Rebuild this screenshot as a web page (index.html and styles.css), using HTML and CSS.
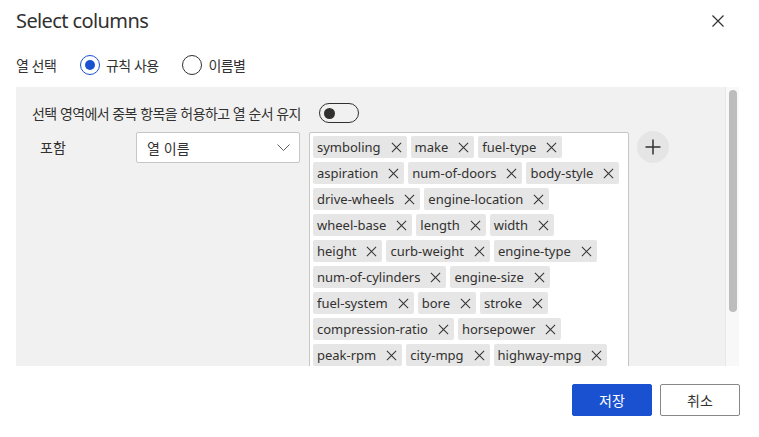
FILE: index.html
```html
<!DOCTYPE html>
<html lang="ko">
<head>
<meta charset="utf-8">
<title>Select columns</title>
<link rel="stylesheet" href="styles.css">
</head>
<body>
<div class="dialog">
  <header class="header">
    <h1 class="title">Select columns</h1>
    <button class="close" aria-label="닫기">
      <svg width="12" height="12" viewBox="0 0 12 12"><path d="M0.5 0.5 L11.5 11.5 M11.5 0.5 L0.5 11.5" stroke="#323130" stroke-width="1.2" fill="none"/></svg>
    </button>
  </header>

  <div class="mode-row">
    <span class="mode-label">열 선택</span>
    <label class="radio checked"><span class="radio-circle"></span>규칙 사용</label>
    <label class="radio"><span class="radio-circle"></span>이름별</label>
  </div>

  <section class="panel">
    <div class="panel-content">
      <div class="toggle-row">
        <span>선택 영역에서 중복 항목을 허용하고 열 순서 유지</span>
        <span class="toggle"><span class="knob"></span></span>
      </div>
      <div class="include-row">
        <span class="include-label">포함</span>
        <div class="dropdown">
          <span>열 이름</span>
          <svg width="13" height="7" viewBox="0 0 13 7"><path d="M0.5 0.5 L6.5 6.5 L12.5 0.5" stroke="#605e5c" stroke-width="1" fill="none"/></svg>
        </div>
        <div class="tags">
          <div class="tag-row">
            <span class="tag">symboling<i class="x"></i></span>
            <span class="tag">make<i class="x"></i></span>
            <span class="tag">fuel-type<i class="x"></i></span>
          </div>
          <div class="tag-row">
            <span class="tag">aspiration<i class="x"></i></span>
            <span class="tag">num-of-doors<i class="x"></i></span>
            <span class="tag">body-style<i class="x"></i></span>
          </div>
          <div class="tag-row">
            <span class="tag">drive-wheels<i class="x"></i></span>
            <span class="tag">engine-location<i class="x"></i></span>
          </div>
          <div class="tag-row">
            <span class="tag">wheel-base<i class="x"></i></span>
            <span class="tag">length<i class="x"></i></span>
            <span class="tag">width<i class="x"></i></span>
          </div>
          <div class="tag-row">
            <span class="tag">height<i class="x"></i></span>
            <span class="tag">curb-weight<i class="x"></i></span>
            <span class="tag">engine-type<i class="x"></i></span>
          </div>
          <div class="tag-row">
            <span class="tag">num-of-cylinders<i class="x"></i></span>
            <span class="tag">engine-size<i class="x"></i></span>
          </div>
          <div class="tag-row">
            <span class="tag">fuel-system<i class="x"></i></span>
            <span class="tag">bore<i class="x"></i></span>
            <span class="tag">stroke<i class="x"></i></span>
          </div>
          <div class="tag-row">
            <span class="tag">compression-ratio<i class="x"></i></span>
            <span class="tag">horsepower<i class="x"></i></span>
          </div>
          <div class="tag-row">
            <span class="tag">peak-rpm<i class="x"></i></span>
            <span class="tag">city-mpg<i class="x"></i></span>
            <span class="tag">highway-mpg<i class="x"></i></span>
          </div>
        </div>
        <button class="add" aria-label="추가">
          <svg width="16" height="16" viewBox="0 0 16 16"><path d="M8 0.5 V15.5 M0.5 8 H15.5" stroke="#323130" stroke-width="1.5" fill="none"/></svg>
        </button>
      </div>
    </div>
    <div class="scrollbar"><div class="thumb"></div></div>
  </section>

  <footer class="footer">
    <button class="btn primary">저장</button>
    <button class="btn">취소</button>
  </footer>
</div>
</body>
</html>
```

FILE: styles.css
```css
* { box-sizing: border-box; }
html, body { margin: 0; padding: 0; background: #ffffff; }
body {
  font-family: "Noto Sans", "Noto Sans CJK KR", sans-serif;
  color: #323130;
  font-size: 14px;
}
.dialog {
  width: 759px;
  height: 437px;
  padding: 0 20px 0 16px;
}
.header {
  display: flex;
  justify-content: space-between;
  align-items: center;
  padding-top: 7px;
  height: 35px;
}
.title {
  margin: 0;
  font-size: 20px;
  font-weight: 400;
  line-height: 28px;
  letter-spacing: -0.6px;
}
.close {
  border: 0;
  background: none;
  padding: 0;
  margin-right: 15px;
  width: 12px;
  height: 12px;
  display: flex;
}
.mode-row {
  display: flex;
  align-items: center;
  height: 20px;
  margin-top: 20px;
  font-family: "Noto Sans CJK KR", sans-serif;
  letter-spacing: -0.6px;
}
.mode-label { width: 64px; }
.radio {
  display: flex;
  align-items: center;
  gap: 6px;
  margin-right: 24px;
}
.radio-circle {
  width: 20px;
  height: 20px;
  border-radius: 50%;
  border: 1px solid #323130;
  display: flex;
  align-items: center;
  justify-content: center;
}
.radio.checked .radio-circle { border-color: #1a51d1; }
.radio.checked .radio-circle::after {
  content: "";
  width: 10px;
  height: 10px;
  border-radius: 50%;
  background: #1a51d1;
}
.panel {
  margin-top: 12px;
  height: 279px;
  background: #f1f1f1;
  display: flex;
  overflow: hidden;
}
.panel-content {
  flex: 1;
  padding: 16px 0 0 16px;
  overflow: hidden;
}
.toggle-row {
  display: flex;
  align-items: center;
  height: 20px;
  gap: 18px;
  font-family: "Noto Sans CJK KR", sans-serif;
  letter-spacing: -0.6px;
}
.toggle {
  width: 40px;
  height: 20px;
  border: 1px solid #323130;
  border-radius: 10px;
  display: flex;
  align-items: center;
  padding-left: 4px;
}
.knob {
  width: 11px;
  height: 11px;
  border-radius: 50%;
  background: #323130;
}
.include-row {
  display: flex;
  align-items: flex-start;
  margin-top: 9px;
  padding-left: 8px;
}
.include-label {
  width: 96px;
  line-height: 31px;
  font-family: "Noto Sans CJK KR", sans-serif;
}
.dropdown {
  width: 164px;
  height: 31px;
  background: #fff;
  border: 1px solid #c8c6c4;
  border-radius: 2px;
  display: flex;
  align-items: center;
  justify-content: space-between;
  padding: 0 9px 0 10px;
  font-family: "Noto Sans CJK KR", sans-serif;
}
.tags {
  margin-left: 9px;
  width: 320px;
  background: #fff;
  border: 1px solid #c8c6c4;
  border-radius: 2px;
  padding: 3px;
  display: flex;
  flex-direction: column;
  gap: 4px;
}
.tag-row {
  display: flex;
  gap: 4px;
}
.tag {
  display: flex;
  align-items: center;
  height: 22px;
  padding: 0 6px 0 4px;
  background: #e6e6e6;
  border-radius: 2px;
  font-size: 13px;
  white-space: nowrap;
  gap: 10px;
}
.x {
  position: relative;
  width: 10px;
  height: 10px;
  display: block;
}
.x::before, .x::after {
  content: "";
  position: absolute;
  left: -1px;
  top: 4.5px;
  width: 13px;
  height: 1px;
  background: #323130;
  transform: rotate(45deg);
}
.x::after { transform: rotate(-45deg); }
.add {
  margin-left: 8px;
  width: 32px;
  height: 32px;
  border-radius: 50%;
  border: 0;
  background: #e5e5e5;
  display: flex;
  align-items: center;
  justify-content: center;
  padding: 0;
  margin-top: -1px;
}
.scrollbar {
  width: 14px;
  background: #f8f8f8;
  border-left: 1px solid #e8e8e8;
  padding: 3px 0 0 3px;
}
.thumb {
  width: 8px;
  height: 222px;
  border-radius: 4px;
  background: #bdbdbd;
}
.footer {
  display: flex;
  justify-content: flex-end;
  gap: 8px;
  margin-top: 18px;
  margin-right: -1px;
}
.btn {
  width: 80px;
  height: 32px;
  border-radius: 2px;
  border: 1px solid #8a8886;
  background: #fff;
  color: #323130;
  font-family: "Noto Sans CJK KR", sans-serif;
  font-size: 14px;
  padding: 0;
}
.btn.primary {
  background: #1a51d1;
  border-color: #1a51d1;
  color: #fff;
}
```
